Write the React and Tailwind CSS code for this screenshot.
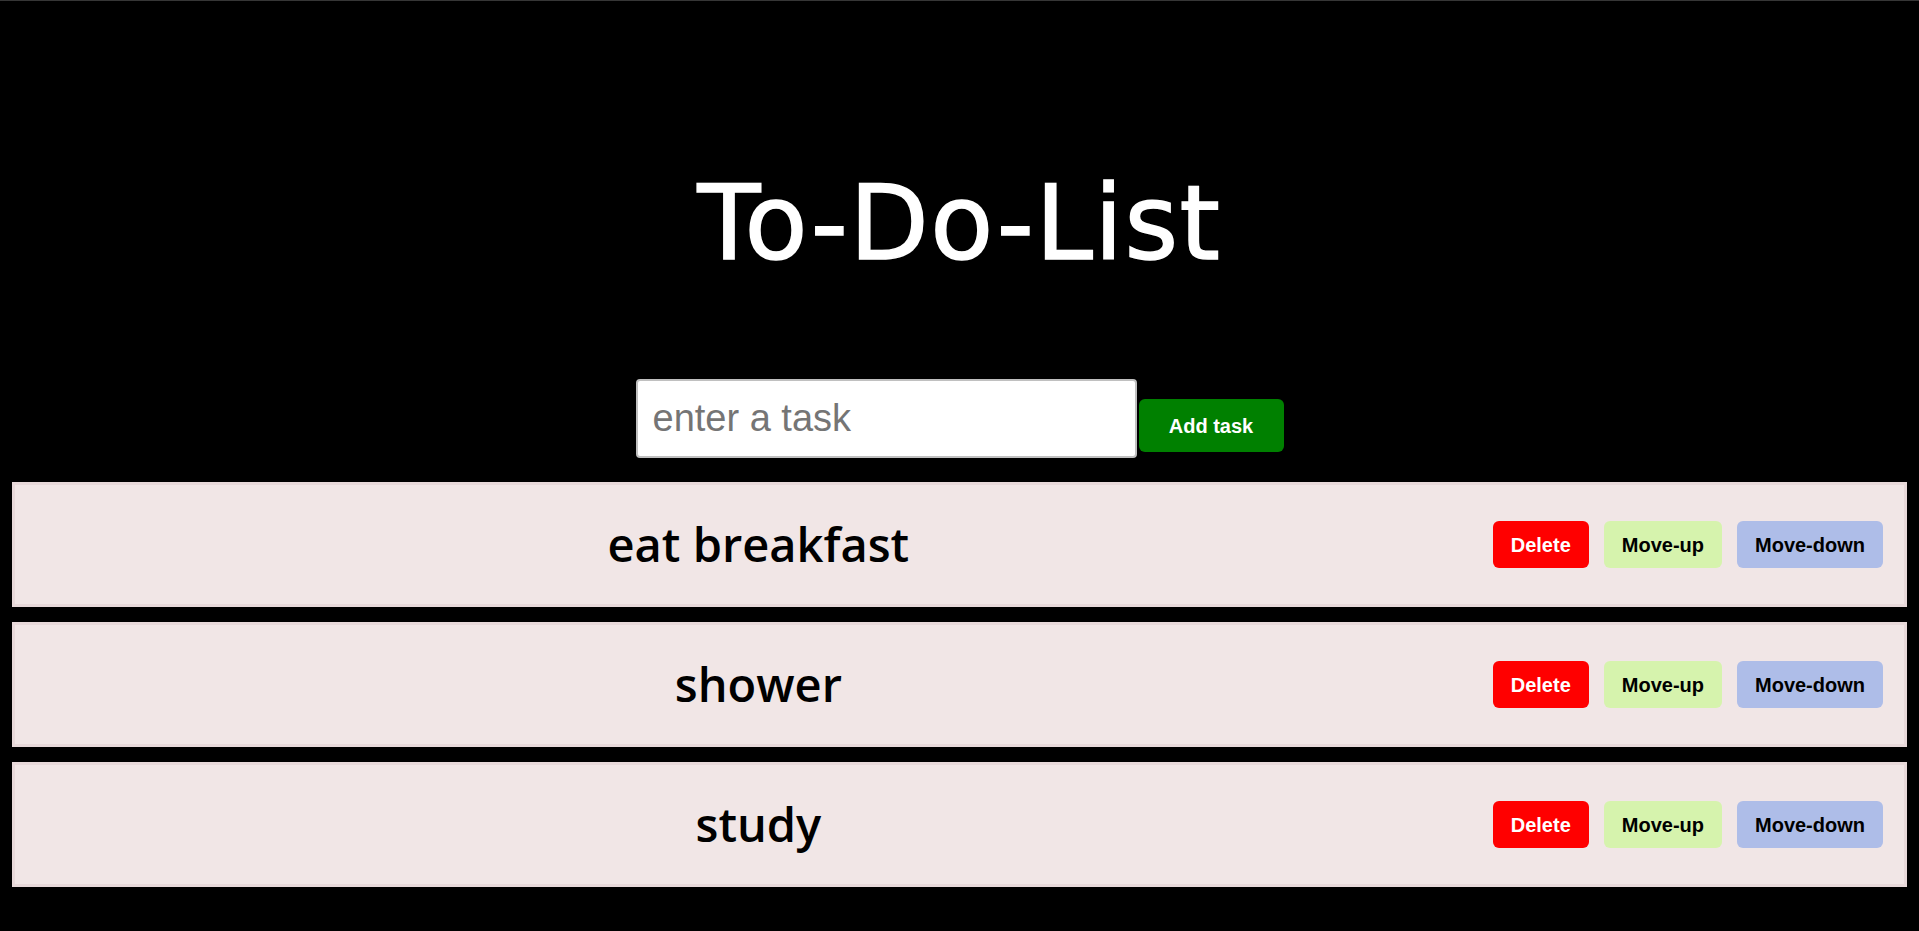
import React from "react";

const tasks = ["eat breakfast", "shower", "study"];

export default function App() {
  return (
    <div className="min-h-screen bg-black border-t border-[#363636] px-[12px]">
      <h1
        className="pt-[171px] text-center text-white text-[103px] leading-none font-normal tracking-[1.5px] [-webkit-text-stroke:1.5px_white]"
        style={{ fontFamily: '"DejaVu Sans", sans-serif' }}
      >
        To-Do-List
      </h1>
      <div className="mt-[104px] flex justify-center items-start gap-[2px]">
        <input
          type="text"
          placeholder="enter a task"
          className="w-[501px] h-[79px] bg-white border-2 border-[#c0c0c0] rounded-[4px] px-[15px] text-[38px] text-black placeholder:text-[#757575] outline-none"
          style={{ fontFamily: '"Liberation Sans", Arial, sans-serif' }}
        />
        <button
          className="mt-[20px] w-[145px] h-[53px] bg-[#008000] text-white font-bold text-[20px] rounded-[6px]"
          style={{ fontFamily: '"Liberation Sans", Arial, sans-serif' }}
        >
          Add task
        </button>
      </div>
      <ol className="mt-[24px] flex flex-col gap-[15px]">
        {tasks.map((t) => (
          <li
            key={t}
            className="h-[125px] flex items-center bg-[#f1e6e6] border-[3px] border-[#e8d9da] pl-[24px] pr-[21px]"
          >
            <span
              className="flex-1 text-center text-black text-[47px] font-semibold"
              style={{ fontFamily: '"Open Sans", sans-serif' }}
            >
              {t}
            </span>
            <div
              className="ml-[15px] flex items-center gap-[15px]"
              style={{ fontFamily: '"Liberation Sans", Arial, sans-serif' }}
            >
              <button className="h-[47px] px-[18px] rounded-[6px] bg-[#ff0000] text-white font-bold text-[20px]">
                Delete
              </button>
              <button className="h-[47px] px-[18px] rounded-[6px] bg-[#d6f3ad] text-black font-bold text-[20px]">
                Move-up
              </button>
              <button className="h-[47px] px-[18px] rounded-[6px] bg-[#aebde8] text-black font-bold text-[20px]">
                Move-down
              </button>
            </div>
          </li>
        ))}
      </ol>
    </div>
  );
}
